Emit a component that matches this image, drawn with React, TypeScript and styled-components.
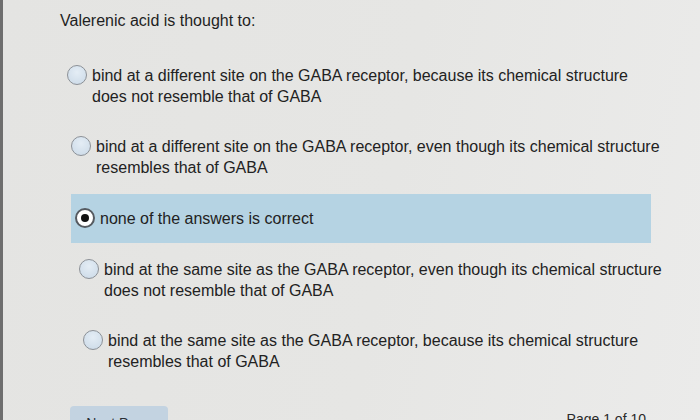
import React from "react";
import styled, { createGlobalStyle } from "styled-components";

const Global = createGlobalStyle`
  html, body { margin: 0; padding: 0; background: #e6e6e4; }
  body { font-family: "Liberation Sans", Arial, sans-serif; color: #222; }
`;

const Page = styled.div`
  width: 700px;
  height: 420px;
  overflow: hidden;
  box-sizing: border-box;
  border-left: 3px solid #6e6e6e;
  background: linear-gradient(100deg, #e4e4e2 0%, #e6e6e4 55%, #ebebea 100%);
  padding: 11px 0 0 57px;
  display: flex;
  flex-direction: column;
`;

const Question = styled.div`
  font-size: 16px;
  line-height: 20px;
  color: #1f1f1f;
`;

const OptionList = styled.div`
  margin-top: 21px;
  display: flex;
  flex-direction: column;
  gap: 3px;
`;

const OptionRow = styled.label<{ $indent: number; $selected?: boolean }>`
  display: flex;
  align-items: flex-start;
  gap: 5px;
  width: 580px;
  box-sizing: border-box;
  margin-left: ${(p) => p.$indent}px;
  padding: ${(p) => (p.$selected ? "14px 4px 14px 4px" : "13px 4px")};
  background: ${(p) => (p.$selected ? "#b5d3e3" : "transparent")};
  font-size: 16px;
  line-height: 21px;
  color: #222;
`;

const Radio = styled.span<{ $checked?: boolean }>`
  flex: none;
  width: 20px;
  height: 20px;
  box-sizing: border-box;
  border-radius: 50%;
  border: ${(p) => (p.$checked ? "2px solid #555a60" : "1.5px solid #8c9197")};
  background: ${(p) =>
    p.$checked
      ? "#ffffff"
      : "radial-gradient(circle at 50% 35%, #e4edf5 0%, #d2dfeb 70%, #c6d4e1 100%)"};
  display: flex;
  align-items: center;
  justify-content: center;
`;

const Dot = styled.span`
  width: 8px;
  height: 8px;
  border-radius: 50%;
  background: #111;
`;

const OptionText = styled.span`
  display: block;
  white-space: nowrap;
`;

const Footer = styled.div`
  margin-top: 21px;
  margin-left: 10px;
  width: 576px;
  display: flex;
  justify-content: space-between;
  align-items: flex-start;
`;

const NextButton = styled.button`
  width: 98px;
  height: 34px;
  border: none;
  border-radius: 4px;
  background: #c3d3e1;
  color: #2a2f36;
  font-family: "Liberation Sans", Arial, sans-serif;
  font-size: 14px;
  display: flex;
  align-items: flex-start;
  justify-content: center;
  padding: 9px 0 0 0;
`;

const PageInfo = styled.div`
  font-size: 14px;
  line-height: 16px;
  margin-top: 5px;
  color: #2a2a2a;
`;

const options = [
  ["bind at a different site on the GABA receptor, because its chemical structure", "does not resemble that of GABA"],
  ["bind at a different site on the GABA receptor, even though its chemical structure", "resembles that of GABA"],
  ["none of the answers is correct"],
  ["bind at the same site as the GABA receptor, even though its chemical structure", "does not resemble that of GABA"],
  ["bind at the same site as the GABA receptor, because its chemical structure", "resembles that of GABA"],
];

export default function App() {
  const selected = 2;
  return (
    <>
      <Global />
      <Page>
        <Question>Valerenic acid is thought to:</Question>
        <OptionList>
          {options.map((lines, i) => (
            <OptionRow key={i} $indent={3 + i * 4} $selected={i === selected}>
              <Radio $checked={i === selected}>{i === selected && <Dot />}</Radio>
              <OptionText>
                {lines.map((l, j) => (
                  <React.Fragment key={j}>
                    {j > 0 && <br />}
                    {l}
                  </React.Fragment>
                ))}
              </OptionText>
            </OptionRow>
          ))}
        </OptionList>
        <Footer>
          <NextButton>Next Page</NextButton>
          <PageInfo>Page 1 of 10</PageInfo>
        </Footer>
      </Page>
    </>
  );
}
